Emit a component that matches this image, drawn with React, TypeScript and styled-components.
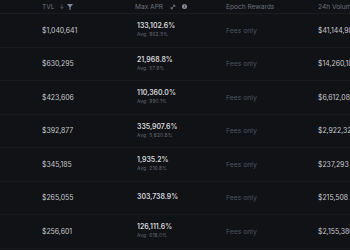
import type { FC } from 'react';
import styled, { createGlobalStyle } from 'styled-components';

type Pool = {
  tvl: string;
  apr: string;
  avg?: string;
  volume: string;
};

const pools: Pool[] = [
  { tvl: '$1,040,641', apr: '133,102.6%', avg: 'Avg: 962.5%', volume: '$41,144,980' },
  { tvl: '$630,295', apr: '21,968.8%', avg: 'Avg: 57.9%', volume: '$14,260,183' },
  { tvl: '$423,606', apr: '110,360.0%', avg: 'Avg: 990.1%', volume: '$6,612,084' },
  { tvl: '$392,877', apr: '335,907.6%', avg: 'Avg: 5,820.8%', volume: '$2,922,321' },
  { tvl: '$345,185', apr: '1,935.2%', avg: 'Avg: 216.8%', volume: '$237,293' },
  { tvl: '$265,055', apr: '303,738.9%', volume: '$215,508' },
  { tvl: '$256,601', apr: '126,111.6%', avg: 'Avg: 618.0%', volume: '$2,155,380' },
];

const GlobalStyle = createGlobalStyle`
  html, body {
    margin: 0;
    background: #111215;
    overflow: hidden;
  }
  body {
    font-family: Inter, "Liberation Sans", sans-serif;
  }
`;

const App: FC = () => {
  return (
    <>
      <GlobalStyle />
      <Table>
        <HeaderRow>
          <HeadCell>
            TVL
            <SortArrow>↓</SortArrow>
            <svg width="6" height="6" viewBox="0 0 10 10">
              <path d="M0 0h10L6 5v5L4 9V5z" fill="#7f8ba3" />
            </svg>
          </HeadCell>
          <HeadCell>
            Max APR
            <svg width="6" height="6" viewBox="0 0 10 10" style={{ marginLeft: 4 }}>
              <path d="M2 8L8 2M5 2h3v3M2 5v3h3" stroke="#7a7f89" strokeWidth="1.4" fill="none" />
            </svg>
            <InfoDot>i</InfoDot>
          </HeadCell>
          <HeadCell>Epoch Rewards</HeadCell>
          <HeadCell>24h Volume</HeadCell>
        </HeaderRow>
        {pools.map((pool) => (
          <Row key={pool.tvl}>
            <Value>{pool.tvl}</Value>
            <AprCell>
              <AprValue>{pool.apr}</AprValue>
              {pool.avg && <AprAvg>{pool.avg}</AprAvg>}
            </AprCell>
            <Muted>Fees only</Muted>
            <Value>{pool.volume}</Value>
          </Row>
        ))}
      </Table>
    </>
  );
};

export default App;

const Table = styled.div`
  width: 350px;
  height: 250px;
  overflow: hidden;
  background: #111215;
`;

const HeaderRow = styled.div`
  display: grid;
  grid-template-columns: 93px 91px 92px 1fr;
  align-items: center;
  height: 13px;
  padding-left: 42px;
  border-bottom: 1px solid #1c1d21;
`;

const HeadCell = styled.div`
  display: flex;
  align-items: center;
  gap: 3px;
  font-size: 6.6px;
  color: #6c717c;
  white-space: nowrap;
`;

const SortArrow = styled.span`
  font-size: 5.5px;
  color: #6c717c;
  margin-left: 2px;
`;

const InfoDot = styled.span`
  display: inline-flex;
  align-items: center;
  justify-content: center;
  width: 5px;
  height: 5px;
  border-radius: 50%;
  background: #8a8e97;
  color: #111215;
  font-size: 4px;
  font-weight: 700;
  margin-left: 3px;
`;

const Row = styled.div`
  display: grid;
  grid-template-columns: 93px 91px 92px 1fr;
  align-items: center;
  height: 33.5px;
  padding-left: 42px;
  border-bottom: 1px solid #18191d;
  box-sizing: border-box;
  white-space: nowrap;
`;

const Value = styled.div`
  font-size: 6.9px;
  color: #c6c9cf;
`;

const AprCell = styled.div`
  display: flex;
  flex-direction: column;
  gap: 2px;
  padding-left: 2px;
`;

const AprValue = styled.div`
  font-size: 6.9px;
  line-height: 1;
  font-weight: 600;
  color: #d4d6db;
`;

const AprAvg = styled.div`
  font-size: 4.8px;
  line-height: 1;
  letter-spacing: 0.2px;
  color: #666b75;
`;

const Muted = styled.div`
  font-size: 6.8px;
  color: #4d5361;
`;
